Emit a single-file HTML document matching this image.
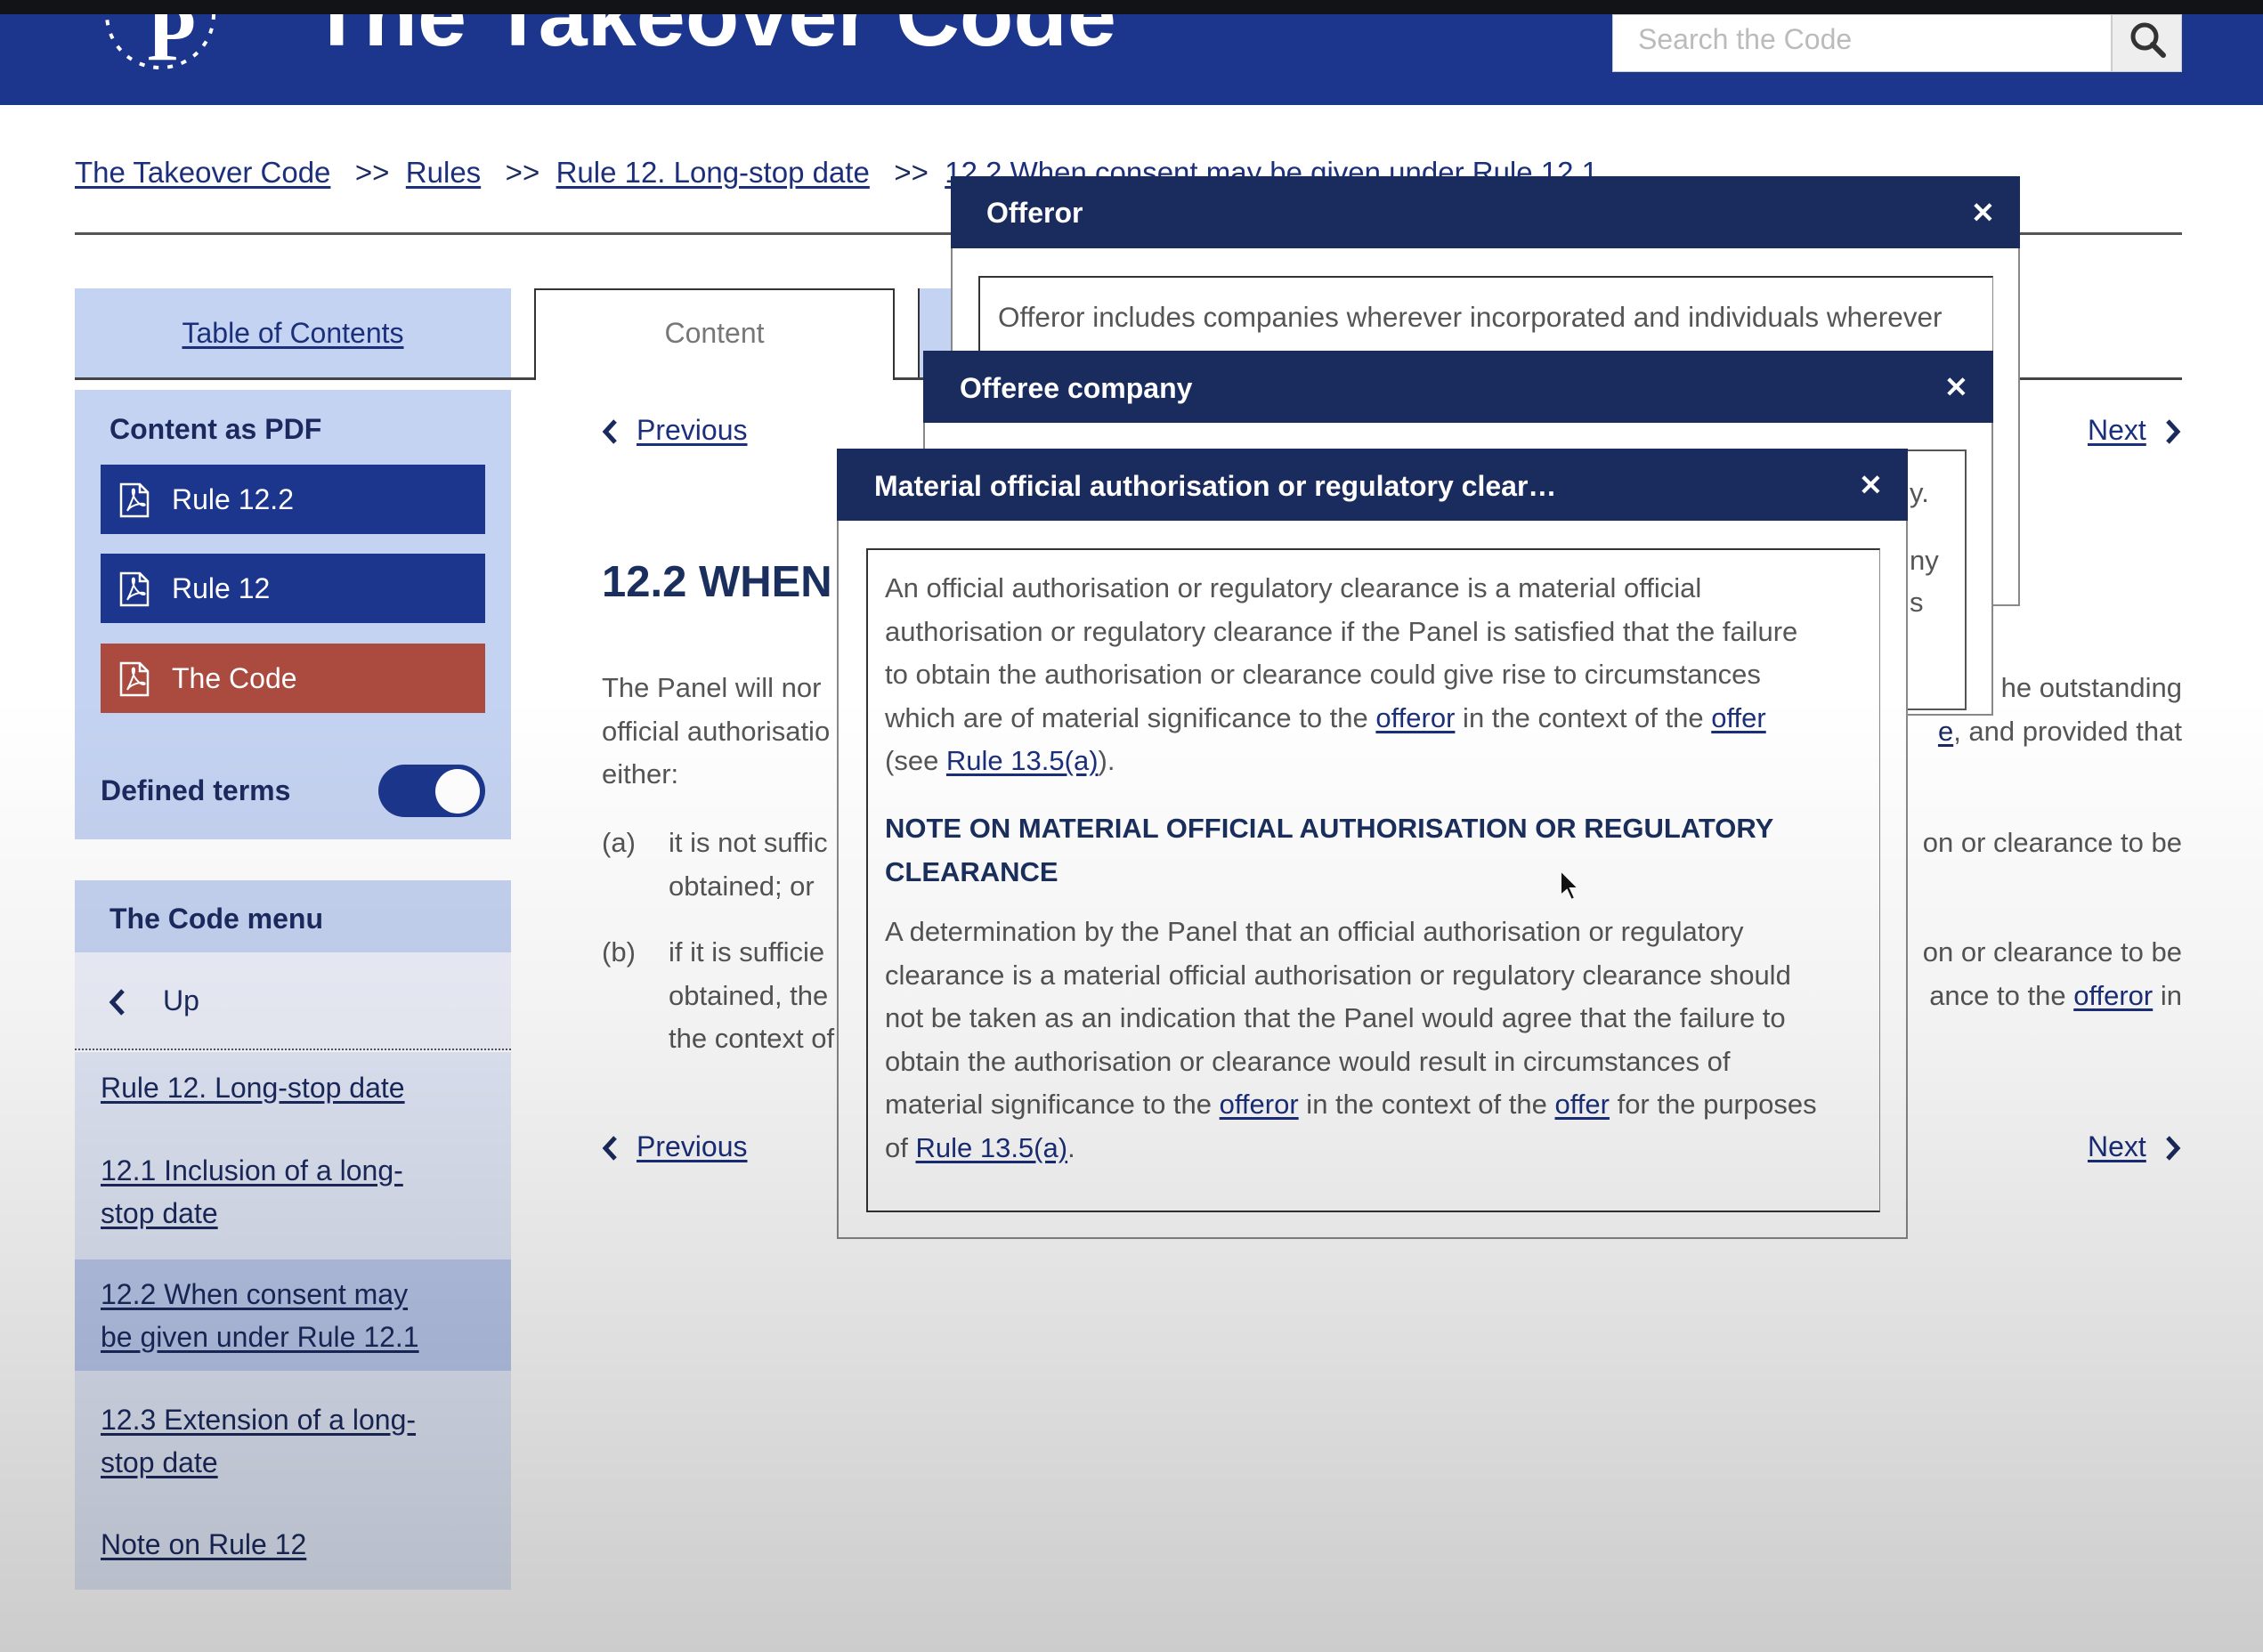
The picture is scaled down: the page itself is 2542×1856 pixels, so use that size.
<!DOCTYPE html>
<html><head><meta charset="utf-8">
<style>
*{margin:0;padding:0;box-sizing:border-box}
body{width:2542px;height:1856px;position:relative;overflow:hidden;background:#fff;font-family:"Liberation Sans",Arial,sans-serif;color:#555}
.a{position:absolute}
a,.u{color:#1b2f7a;text-decoration:underline;text-underline-offset:4px}
.nw{white-space:nowrap}
.hdr{background:#1a2b5e;color:#fff;font-weight:bold;font-size:31px}
.btn{position:absolute;left:113px;width:432px;height:78px;color:#fff;font-size:32px;line-height:78px;padding-left:80px}
.btn svg{position:absolute;left:20px;top:20px}
.lk{position:absolute;left:113px;font-size:32px;line-height:48px;color:#1b2a5e}
.p{font-size:31px;line-height:48.5px;color:#555}
</style></head><body>
<div class="a" style="left:0;top:0;width:2542px;height:16px;background:#121316"></div>
<div class="a" style="left:0;top:16px;width:2542px;height:102px;background:#1b368c;overflow:hidden">
  <div class="a nw" style="left:348px;top:-56px;font-size:99px;font-weight:bold;color:#fff">The Takeover Code</div>
  <div class="a" style="left:165px;top:-30px;font-size:90px;color:#fff;font-family:'Liberation Serif',serif;font-weight:bold">P</div>
  <svg class="a" style="left:100px;top:-40px" width="160" height="140"><circle cx="80" cy="40" r="60" fill="none" stroke="#fff" stroke-width="4" stroke-dasharray="6 10"/></svg>
  <div class="a" style="left:1811px;top:0;width:561px;height:65px;background:#fff;border:1px solid #ccc"></div>
  <div class="a nw" style="left:1840px;top:10px;font-size:32px;color:#bbb">Search the Code</div>
  <div class="a" style="left:2372px;top:0;width:79px;height:65px;background:#eee;border:1px solid #ccc"></div>
  <svg class="a" style="left:2390px;top:6px" width="46" height="46"><circle cx="19" cy="19" r="13" fill="none" stroke="#333" stroke-width="5"/><path d="M28 28 L40 40" stroke="#333" stroke-width="6" stroke-linecap="round"/></svg>
</div>
<div class="a nw" style="left:84px;top:175px;font-size:33px;color:#1b2a5e">
<a>The Takeover Code</a>&nbsp;&nbsp;&nbsp;&gt;&gt;&nbsp;&nbsp;<a>Rules</a>&nbsp;&nbsp;&nbsp;&gt;&gt;&nbsp;&nbsp;<a>Rule 12. Long-stop date</a>&nbsp;&nbsp;&nbsp;&gt;&gt;&nbsp;&nbsp;<a>12.2 When consent may be given under Rule 12.1</a></div>
<div class="a" style="left:84px;top:261px;width:2367px;height:3px;background:#555"></div>
<div class="a" style="left:84px;top:324px;width:490px;height:101px;background:#c5d3f2"></div>
<div class="a nw" style="left:84px;top:356px;width:490px;text-align:center;font-size:32px"><a>Table of Contents</a></div>
<div class="a" style="left:600px;top:324px;width:405px;height:103px;background:#fff;border:2px solid #333;border-bottom:none"></div>
<div class="a nw" style="left:600px;top:356px;width:405px;text-align:center;font-size:32px;color:#777">Content</div>
<div class="a" style="left:1031px;top:324px;width:100px;height:101px;background:#c5d3f2;border-left:2px solid #333"></div>
<div class="a" style="left:84px;top:424px;width:516px;height:3px;background:#444"></div>
<div class="a" style="left:1005px;top:424px;width:1446px;height:3px;background:#444"></div>
<div class="a" style="left:84px;top:438px;width:490px;height:505px;background:#c5d3f2"></div>
<div class="a nw" style="left:123px;top:464px;font-size:32px;font-weight:bold;color:#1b2a5e">Content as PDF</div>
<div class="btn" style="top:522px;background:#1b368c"><svg width="36" height="40"><path d="M3 2h21l9 9v27H3z M24 2v9h9" fill="none" stroke="#fff" stroke-width="2.5"/><path d="M10 32 C14 24 18 14 18 10 C18 6 15 7 16 12 C17 18 24 26 28 26 C31 26 30 23 24 24 C18 25 12 28 10 32z" fill="none" stroke="#fff" stroke-width="2"/></svg>Rule 12.2</div>
<div class="btn" style="top:622px;background:#1b368c"><svg width="36" height="40"><path d="M3 2h21l9 9v27H3z M24 2v9h9" fill="none" stroke="#fff" stroke-width="2.5"/><path d="M10 32 C14 24 18 14 18 10 C18 6 15 7 16 12 C17 18 24 26 28 26 C31 26 30 23 24 24 C18 25 12 28 10 32z" fill="none" stroke="#fff" stroke-width="2"/></svg>Rule 12</div>
<div class="btn" style="top:723px;background:#ab4a3f"><svg width="36" height="40"><path d="M3 2h21l9 9v27H3z M24 2v9h9" fill="none" stroke="#fff" stroke-width="2.5"/><path d="M10 32 C14 24 18 14 18 10 C18 6 15 7 16 12 C17 18 24 26 28 26 C31 26 30 23 24 24 C18 25 12 28 10 32z" fill="none" stroke="#fff" stroke-width="2"/></svg>The Code</div>
<div class="a nw" style="left:113px;top:870px;font-size:32px;font-weight:bold;color:#1b2a5e">Defined terms</div>
<div class="a" style="left:425px;top:859px;width:120px;height:59px;border-radius:30px;background:#1b368c"></div>
<div class="a" style="left:489px;top:864px;width:50px;height:50px;border-radius:50%;background:#fff"></div>
<div class="a" style="left:84px;top:989px;width:490px;height:81px;background:#c5d3f2"></div>
<div class="a nw" style="left:123px;top:1014px;font-size:32px;font-weight:bold;color:#1b2a5e">The Code menu</div>
<div class="a" style="left:84px;top:1070px;width:490px;height:110px;background:#eef1fb;border-bottom:2px dotted #555"></div>
<svg class="a" style="left:120px;top:1110px" width="24" height="32"><path d="M18 3 L6 16 L18 29" fill="none" stroke="#1b2a5e" stroke-width="5"/></svg>
<div class="a nw" style="left:183px;top:1106px;font-size:32px;color:#1b2a5e">Up</div>
<div class="a" style="left:84px;top:1182px;width:490px;height:604px;background:#e3e9f9"></div>
<div class="a" style="left:84px;top:1415px;width:490px;height:125px;background:#bccaee"></div>
<div class="lk u nw" style="top:1198px">Rule 12. Long-stop date</div>
<div class="lk u nw" style="top:1291px">12.1 Inclusion of a long-<br>stop date</div>
<div class="lk u nw" style="top:1430px">12.2 When consent may<br>be given under Rule 12.1</div>
<div class="lk u nw" style="top:1571px">12.3 Extension of a long-<br>stop date</div>
<div class="lk u nw" style="top:1711px">Note on Rule 12</div>
<svg class="a" style="left:674px;top:470px" width="22" height="30"><path d="M17 3 L6 15 L17 27" fill="none" stroke="#1b2a5e" stroke-width="5"/></svg>
<div class="a nw" style="left:715px;top:465px;font-size:32px"><a>Previous</a></div>
<div class="a nw" style="left:2345px;top:465px;font-size:32px"><a>Next</a></div>
<svg class="a" style="left:2430px;top:470px" width="22" height="30"><path d="M5 3 L16 15 L5 27" fill="none" stroke="#1b2a5e" stroke-width="5"/></svg>
<div class="a nw" style="left:676px;top:626px;font-size:49px;font-weight:bold;color:#1b2f5e">12.2 WHEN</div>
<div class="a p nw" style="left:676px;top:749px">The Panel will nor<br>official authorisatio<br>either:</div>
<div class="a p nw" style="left:676px;top:923px">(a)</div>
<div class="a p nw" style="left:751px;top:923px">it is not suffic<br>obtained; or</div>
<div class="a p nw" style="left:676px;top:1046px">(b)</div>
<div class="a p nw" style="left:751px;top:1046px">if it is sufficie<br>obtained, the<br>the context of</div>
<div class="a p nw" style="left:2100px;top:749px;width:351px;text-align:right">he outstanding<br><span class="u" style="color:#1b2a5e">e</span>, and provided that</div>
<div class="a p nw" style="left:2100px;top:923px;width:351px;text-align:right">on or clearance to be</div>
<div class="a p nw" style="left:2100px;top:1046px;width:351px;text-align:right">on or clearance to be<br>ance to the <a>offeror</a> in</div>
<svg class="a" style="left:674px;top:1275px" width="22" height="30"><path d="M17 3 L6 15 L17 27" fill="none" stroke="#1b2a5e" stroke-width="5"/></svg>
<div class="a nw" style="left:715px;top:1270px;font-size:32px"><a>Previous</a></div>
<div class="a nw" style="left:2345px;top:1270px;font-size:32px"><a>Next</a></div>
<svg class="a" style="left:2430px;top:1275px" width="22" height="30"><path d="M5 3 L16 15 L5 27" fill="none" stroke="#1b2a5e" stroke-width="5"/></svg>
<div class="a" style="left:1068px;top:198px;width:1201px;height:483px;background:#fff;border:2px solid #888"></div>
<div class="a hdr" style="left:1068px;top:198px;width:1201px;height:81px"></div>
<div class="a nw" style="left:1108px;top:221px;font-size:32px;font-weight:bold;color:#fff">Offeror</div>
<div class="a" style="left:2214px;top:220px;font-size:32px;font-weight:bold;color:#fff">✕</div>
<div class="a" style="left:1099px;top:310px;width:1140px;height:300px;border:2px solid #333;border-right:1px solid #888"></div>
<div class="a p nw" style="left:1121px;top:332px;font-size:31.5px">Offeror includes companies wherever incorporated and individuals wherever</div>
<div class="a" style="left:1037px;top:394px;width:1202px;height:410px;background:#fff;border:2px solid #888"></div>
<div class="a hdr" style="left:1037px;top:394px;width:1202px;height:81px"></div>
<div class="a nw" style="left:1078px;top:418px;font-size:32px;font-weight:bold;color:#fff">Offeree company</div>
<div class="a" style="left:2184px;top:416px;font-size:32px;font-weight:bold;color:#fff">✕</div>
<div class="a" style="left:1068px;top:505px;width:1141px;height:293px;border:2px solid #555"></div>
<div class="a p nw" style="left:2145px;top:530px">y.</div>
<div class="a p nw" style="left:2145px;top:606px">ny</div>
<div class="a p nw" style="left:2145px;top:653px">s</div>
<div class="a" style="left:940px;top:504px;width:1203px;height:888px;background:#fff;border:2px solid #888"></div>
<div class="a hdr" style="left:940px;top:504px;width:1203px;height:81px"></div>
<div class="a nw" style="left:982px;top:528px;font-size:32px;font-weight:bold;color:#fff">Material official authorisation or regulatory clear…</div>
<div class="a" style="left:2088px;top:526px;font-size:32px;font-weight:bold;color:#fff">✕</div>
<div class="a" style="left:973px;top:616px;width:1139px;height:746px;border:2px solid #333;border-right:1px solid #888"></div>
<div class="a p nw" style="left:994px;top:637px;font-size:31px">An official authorisation or regulatory clearance is a material official<br>authorisation or regulatory clearance if the Panel is satisfied that the failure<br>to obtain the authorisation or clearance could give rise to circumstances<br>which are of material significance to the <a>offeror</a> in the context of the <a>offer</a><br>(see <a>Rule 13.5(a)</a>).</div>
<div class="a nw" style="left:994px;top:907px;font-size:31px;line-height:48.5px;font-weight:bold;color:#1b2f5e">NOTE ON MATERIAL OFFICIAL AUTHORISATION OR REGULATORY<br>CLEARANCE</div>
<div class="a p nw" style="left:994px;top:1023px;font-size:31px">A determination by the Panel that an official authorisation or regulatory<br>clearance is a material official authorisation or regulatory clearance should<br>not be taken as an indication that the Panel would agree that the failure to<br>obtain the authorisation or clearance would result in circumstances of<br>material significance to the <a>offeror</a> in the context of the <a>offer</a> for the purposes<br>of <a>Rule 13.5(a)</a>.</div>
<svg class="a" style="left:1750px;top:976px" width="26" height="38"><path d="M3 2 L3 30 L10 24 L15 35 L19 33 L14 22 L23 22 Z" fill="#111" stroke="#fff" stroke-width="2"/></svg>
<div class="a" style="left:0;top:0;width:2542px;height:1856px;pointer-events:none;background:linear-gradient(to bottom,rgba(0,0,0,0) 0%,rgba(0,0,0,0) 42%,rgba(0,0,0,0.05) 62%,rgba(0,0,0,0.2) 100%)"></div>
</body></html>
